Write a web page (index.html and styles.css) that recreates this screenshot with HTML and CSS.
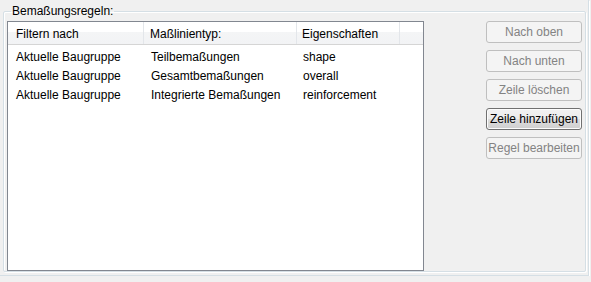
FILE: index.html
```html
<!DOCTYPE html>
<html>
<head>
<meta charset="utf-8">
<link rel="stylesheet" href="styles.css">
</head>
<body>
<div class="frame">
  <fieldset class="group">
    <legend class="group-label">Bemaßungsregeln:</legend>
    <div class="group-body">
      <div class="table">
        <div class="thead">
          <div class="th c1">Filtern nach</div>
          <div class="th c2">Maßlinientyp:</div>
          <div class="th c3">Eigenschaften</div>
          <div class="th c4"></div>
        </div>
        <div class="tbody">
          <div class="tr"><div class="td c1">Aktuelle Baugruppe</div><div class="td c2">Teilbemaßungen</div><div class="td c3">shape</div></div>
          <div class="tr"><div class="td c1">Aktuelle Baugruppe</div><div class="td c2">Gesamtbemaßungen</div><div class="td c3">overall</div></div>
          <div class="tr"><div class="td c1">Aktuelle Baugruppe</div><div class="td c2">Integrierte Bemaßungen</div><div class="td c3">reinforcement</div></div>
        </div>
      </div>
      <div class="buttons">
        <button class="btn" disabled>Nach oben</button>
        <button class="btn" disabled>Nach unten</button>
        <button class="btn" disabled>Zeile löschen</button>
        <button class="btn active">Zeile hinzufügen</button>
        <button class="btn" disabled>Regel bearbeiten</button>
      </div>
    </div>
  </fieldset>
</div>
</body>
</html>
```

FILE: styles.css
```css
html, body {
  margin: 0;
  padding: 0;
  background: #f0f0f0;
  font-family: "Liberation Sans", Arial, sans-serif;
  font-size: 12px;
  color: #000;
}

.frame {
  box-sizing: border-box;
  width: 589px;
  height: 276px;
  border-right: 1px solid #d5dfe5;
  border-bottom: 1px solid #d5dfe5;
  box-shadow: 1px 1px 0 #fff;
  padding: 4px 0 0 3px;
}

.group {
  box-sizing: border-box;
  width: 582px;
  height: 268px;
  margin: 0;
  padding: 0 3px 0 3px;
  border: 1px solid #d5dfe5;
  border-radius: 2px;
  box-shadow: 1px 1px 0 #fff, inset 1px 1px 0 #fff;
}

.group-label {
  padding: 0 1px;
  margin-left: 4px;
  line-height: 14px;
  height: 14px;
}

.group-body {
  display: flex;
  gap: 62px;
  padding-top: 3px;
}

.table {
  box-sizing: border-box;
  width: 417px;
  height: 250px;
  background: #fff;
  border: 1px solid #828790;
}

.thead {
  display: grid;
  grid-template-columns: 136px 153px 103px 1fr;
  height: 22px;
  background: linear-gradient(#ffffff, #ffffff 45%, #f4f5f6 46%, #f2f3f5);
  border-bottom: 1px solid #d5d5d5;
}

.th {
  padding-top: 2px;
  line-height: 20px;
  border-right: 1px solid #e3e6ea;
  white-space: nowrap;
}
.th.c4 { border-right: none; }
.th.c1 { padding-left: 8px; }
.th.c2 { padding-left: 6px; }
.th.c3 { padding-left: 5px; }

.tbody {
  padding-top: 3px;
}

.tr {
  display: grid;
  grid-template-columns: 136px 153px 103px;
  height: 19px;
  line-height: 19px;
}

.td { white-space: nowrap; }
.td.c1 { padding-left: 8px; }
.td.c2 { padding-left: 7px; }
.td.c3 { padding-left: 6px; }

.buttons {
  display: flex;
  flex-direction: column;
  gap: 7px;
}

.btn {
  box-sizing: border-box;
  width: 96px;
  height: 22px;
  margin: 0;
  padding: 0;
  font-family: inherit;
  font-size: 12px;
  border-radius: 3px;
  border: 1px solid #bfbfbf;
  background: #f4f4f4;
  color: #838383;
  white-space: nowrap;
}

.btn.active {
  border-color: #707070;
  background: linear-gradient(#f2f2f2, #ebebeb 50%, #dddddd 51%, #cfcfcf);
  color: #000;
  box-shadow: inset 0 0 0 1px #fcfcfc;
}
```
